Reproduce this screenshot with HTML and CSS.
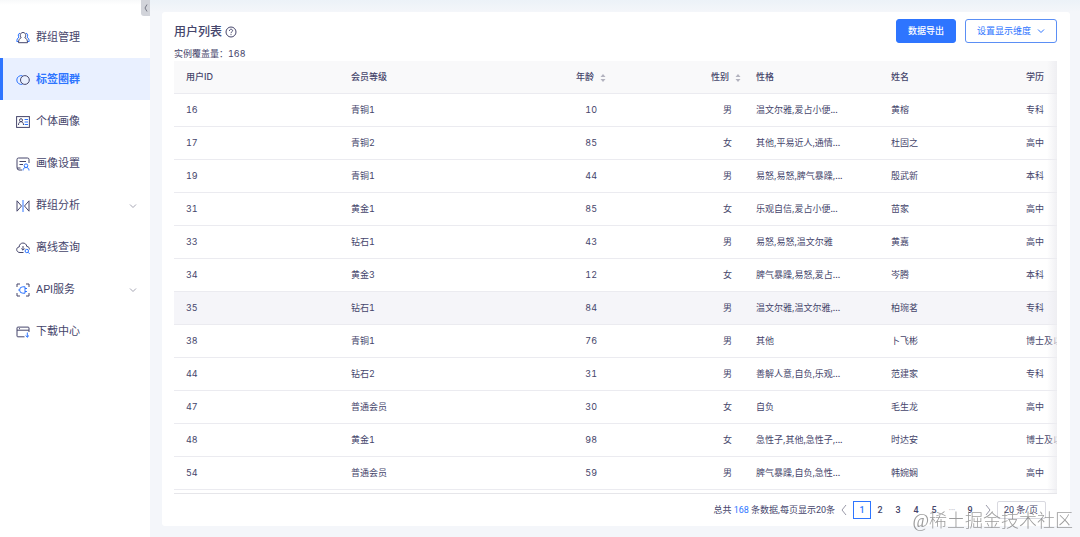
FILE: index.html
```html
<!DOCTYPE html>
<html lang="zh-CN">
<head>
    <meta charset="UTF-8">
    <meta name="viewport" content="width=device-width, initial-scale=1.0">
    <title>用户列表</title>
    <link rel="stylesheet" href="styles.css">
</head>
<body>
    <aside class="sidebar">
        <button class="collapse" type="button" aria-label="收起菜单">
            <svg width="6" height="10" viewBox="0 0 6 10"><path d="M4 1.5L2 5l2 3.5"/></svg>
        </button>
        <nav class="menu">
            <a href="#">
                <svg class="icon" viewBox="0 0 14 14">
                    <g class="blue"><path d="M4 2.2C2 2.5 1.800 5 3 6.200C1.500 7 .8 8.500.8 10.500h2"/><path d="M10 2.200c2 .3 2.200 2.800 1 4c1.500.8 2.200 2.300 2.200 4.300h-2"/></g>
                    <path d="M5.200 6.600C3.600 5 4 1.500 7 1.500s3.400 3.500 1.800 5.100c1.700.8 2.700 2.500 2.700 5.100H2.500c0-2.600 1-4.300 2.700-5.100z"/>
                </svg>
                群组管理
            </a>
            <a href="#" class="active">
                <svg class="icon" viewBox="0 0 14 14">
                    <path class="blue" d="M6.500 2.800A4.400 4.400 0 1 0 6.500 11.200"/>
                    <circle cx="8.900" cy="7" r="4.400"/>
                </svg>
                标签圈群
            </a>
            <a href="#">
                <svg class="icon" viewBox="0 0 14 14">
                    <rect x=".6" y="1.600" width="12.800" height="10.800"/>
                    <circle cx="5" cy="5.200" r="1.500"/><path d="M2.500 10c0-2 .9-3.300 2.500-3.300S7.500 8 7.500 10"/>
                    <path class="blue" d="M8.600 4.500H12M8.600 7H12M8.600 9.500H12"/>
                </svg>
                个体画像
            </a>
            <a href="#">
                <svg class="icon" viewBox="0 0 14 14">
                    <path d="M13 6V2.500Q13 1 11.500 1H2.500Q1 1 1 2.500v8Q1 13 3 13h3M1 11h3.500M3.500 4.500h6.500M3.500 7.500H7"/>
                    <g class="blue"><circle cx="10" cy="8.700" r="1.800"/><path d="M7 13.500c0-2 1.200-3 3-3s3 1 3 3"/></g>
                </svg>
                画像设置
            </a>
            <a href="#">
                <svg class="icon" viewBox="0 0 14 14">
                    <path d="M1 1.800v10.400L5.500 7zM13 1.800v10.400L8.500 7z"/>
                    <path class="blue" d="M7 1v12"/>
                </svg>
                群组分析
                <svg class="arrow" viewBox="0 0 8 8"><path d="M1 2.500l3 3 3-3"/></svg>
            </a>
            <a href="#">
                <svg class="icon" viewBox="0 0 14 14">
                    <path d="M7.500 11.500H4C-.3 11.500-.2 6 3.200 6C3.200.8 10.400.8 10.800 5.500c1.800 0 2.800 1.300 2.500 3M7 5v4M5.300 7.500L7 9.200l1.700-1.700"/>
                    <g class="blue"><circle cx="10.800" cy="10" r="1.700"/><path d="M12 11.200l1.600 1.600"/></g>
                </svg>
                离线查询
            </a>
            <a href="#">
                <svg class="icon" viewBox="0 0 14 14">
                    <path d="M1 4V1h3M10 1h3v3M13 10v3h-3M4 13H1v-3"/>
                    <path class="blue" d="M9 3.800H6.800a3.200 3.200 0 0 0 0 6.400H9zM9 5.500h2M9 8.500h2M2.200 7h1.500"/>
                </svg>
                API服务
                <svg class="arrow" viewBox="0 0 8 8"><path d="M1 2.500l3 3 3-3"/></svg>
            </a>
            <a href="#">
                <svg class="icon" viewBox="0 0 14 14">
                    <path d="M8.500 11.800H1.800Q1 11.800 1 11V3q0-.9.900-.9h10.200q.9 0 .9.900v4M1 5.200h12M3 3.700h1"/>
                    <path class="blue" d="M11.300 7.500v4.700M9.600 10.500l1.700 1.700 1.700-1.700"/>
                </svg>
                下载中心
            </a>
        </nav>
    </aside>
    <main class="content">
        <section class="card">
            <header class="card-header">
                <div>
                    <h1>
                        用户列表
                        <svg class="help" viewBox="0 0 12 12"><circle cx="6" cy="6" r="5"/><path d="M4.400 4.900c0-2.200 3.200-2.100 3.200-.2C7.600 5.800 6 5.800 6 7.200M6 8.200v.9"/></svg>
                    </h1>
                    <p>实例覆盖量：168</p>
                </div>
                <div class="actions">
                    <button type="button" class="btn primary">数据导出</button>
                    <button type="button" class="btn">设置显示维度 <svg class="arrow" viewBox="0 0 8 8"><path d="M1 2.500l3 3 3-3"/></svg></button>
                </div>
            </header>
            <div class="table-wrap">
                <table>
                    <colgroup>
                        <col class="col-id">
                        <col span="6">
                    </colgroup>
                    <thead>
                        <tr>
                            <th>用户ID</th>
                            <th>会员等级</th>
                            <th class="sortable">年龄<svg class="sorter" viewBox="0 0 6 8"><path d="M3 0l2.500 3h-5zM3 8l2.500-3h-5z"/></svg></th>
                            <th class="sortable">性别<svg class="sorter" viewBox="0 0 6 8"><path d="M3 0l2.500 3h-5zM3 8l2.500-3h-5z"/></svg></th>
                            <th>性格</th>
                            <th>姓名</th>
                            <th>学历</th>
                        </tr>
                    </thead>
                    <tbody>
                        <tr><td>16</td><td>青铜1</td><td class="num">10</td><td class="num">男</td><td>温文尔雅,爱占小便...</td><td>黄榕</td><td>专科</td></tr>
                        <tr><td>17</td><td>青铜2</td><td class="num">85</td><td class="num">女</td><td>其他,平易近人,通情...</td><td>杜固之</td><td>高中</td></tr>
                        <tr><td>19</td><td>青铜1</td><td class="num">44</td><td class="num">男</td><td>易怒,易怒,脾气暴躁,...</td><td>殷武新</td><td>本科</td></tr>
                        <tr><td>31</td><td>黄金1</td><td class="num">85</td><td class="num">女</td><td>乐观自信,爱占小便...</td><td>苗家</td><td>高中</td></tr>
                        <tr><td>33</td><td>钻石1</td><td class="num">43</td><td class="num">男</td><td>易怒,易怒,温文尔雅</td><td>黄嘉</td><td>高中</td></tr>
                        <tr><td>34</td><td>黄金3</td><td class="num">12</td><td class="num">女</td><td>脾气暴躁,易怒,爱占...</td><td>岑腾</td><td>本科</td></tr>
                        <tr class="hover"><td>35</td><td>钻石1</td><td class="num">84</td><td class="num">男</td><td>温文尔雅,温文尔雅,...</td><td>柏琬茗</td><td>专科</td></tr>
                        <tr><td>38</td><td>青铜1</td><td class="num">76</td><td class="num">男</td><td>其他</td><td>卜飞彬</td><td>博士及以上</td></tr>
                        <tr><td>44</td><td>钻石2</td><td class="num">31</td><td class="num">男</td><td>善解人意,自负,乐观...</td><td>范建家</td><td>专科</td></tr>
                        <tr><td>47</td><td>普通会员</td><td class="num">30</td><td class="num">女</td><td>自负</td><td>毛生龙</td><td>高中</td></tr>
                        <tr><td>48</td><td>黄金1</td><td class="num">98</td><td class="num">女</td><td>急性子,其他,急性子,...</td><td>时达安</td><td>博士及以上</td></tr>
                        <tr><td>54</td><td>普通会员</td><td class="num">59</td><td class="num">男</td><td>脾气暴躁,自负,急性...</td><td>韩婉娴</td><td>高中</td></tr>
                    </tbody>
                </table>
            </div>
            <footer class="pagination">
                <span>总共 <b>168</b> 条数据,每页显示20条</span>
                <button type="button" aria-label="上一页"><svg viewBox="0 0 8 12"><path d="M6 1L2 6l4 5"/></svg></button>
                <button type="button" class="current">1</button>
                <button type="button">2</button>
                <button type="button">3</button>
                <button type="button">4</button>
                <button type="button">5</button>
                <button type="button" class="more">•••</button>
                <button type="button">9</button>
                <button type="button" aria-label="下一页"><svg viewBox="0 0 8 12"><path d="M2 1l4 5-4 5"/></svg></button>
                <select aria-label="每页条数"><option>20 条/页</option></select>
            </footer>
        </section>
    </main>
    <div class="watermark">@稀土掘金技术社区</div>
</body>
</html>
```
FILE: styles.css
```css
* {
    box-sizing: border-box;
}
body {
    margin: 0;
    min-height: 100vh;
    display: flex;
    overflow: hidden;
    background: linear-gradient(#ecf2f8, #f4f6fa 12px);
    color: #45456b;
    font-family: Inter, "Noto Sans CJK SC", sans-serif;
    font-size: 9px;
    font-variant-numeric: tabular-nums;
    line-height: 12px;
}
button, select {
    font: inherit;
    color: inherit;
    cursor: pointer;
}
svg {
    fill: none;
    stroke: currentColor;
}
.sidebar {
    position: relative;
    flex: none;
    width: 150px;
    padding-top: 16px;
    background: linear-gradient(#f8f9fa, #fff 5px);
}
.collapse {
    position: absolute;
    top: 0;
    right: 0;
    display: flex;
    align-items: center;
    justify-content: center;
    width: 9px;
    height: 16px;
    padding: 0;
    border: none;
    border-radius: 0 0 0 3px;
    background: #d2d4da;
    color: #777985;
}
.menu a {
    display: flex;
    align-items: center;
    gap: 6px;
    height: 42px;
    padding: 2px 13px 0 16px;
    color: #45456b;
    font-family: Roboto, "Noto Sans CJK SC", sans-serif;
    font-size: 11px;
    text-decoration: none;
}
.menu .active {
    border-left: 3px solid #2e75ff;
    padding-left: 13px;
    background: #e9f0ff;
    color: #2e75ff;
    font-weight: 600;
}
.icon {
    width: 14px;
    height: 14px;
    color: #45456b;
}
.blue {
    stroke: #2e75ff;
}
.arrow {
    width: 8px;
    height: 8px;
}
.menu .arrow {
    margin-left: auto;
    color: #a5a5b3;
}
.content {
    flex: 1;
    min-width: 0;
    padding: 12px 10px 12px 12px;
}
.card {
    padding: 7px 13px 0 12px;
    border-radius: 3px;
    background: #fff;
}
.card-header {
    display: flex;
    justify-content: space-between;
    height: 42px;
}
h1 {
    display: flex;
    align-items: center;
    gap: 3px;
    margin: 0;
    padding-top: 1px;
    font-size: 12px;
    font-weight: 500;
    line-height: 24px;
}
.help {
    width: 12px;
    height: 12px;
}
.card-header p {
    margin: 4px 0 0;
}
.actions {
    display: flex;
    gap: 9px;
}
.btn {
    display: flex;
    align-items: center;
    gap: 6px;
    height: 24px;
    padding: 0 11px;
    border: 1px solid #5b8ff5;
    border-radius: 3px;
    background: #fff;
    color: #2e75ff;
}
.primary {
    border-color: #2e75ff;
    background: #2e75ff;
    color: #fff;
    font-weight: 500;
}
.table-wrap {
    position: relative;
    height: 433px;
    overflow: hidden;
    border-bottom: 1px solid #e6e6ea;
}
/* fade over the columns that scroll out on the right */
.table-wrap::after {
    content: "";
    position: absolute;
    top: 0;
    right: 0;
    bottom: 0;
    width: 10px;
    background: linear-gradient(to right, rgba(236, 236, 240, 0), rgba(236, 236, 240, 0.8));
}
table {
    width: 975px;
    table-layout: fixed;
    border-collapse: separate;
    border-spacing: 0;
}
.col-id {
    width: 165px;
}
th, td {
    height: 33px;
    padding: 0 12px;
    border-bottom: 1px solid #ebebf0;
    text-align: left;
    white-space: nowrap;
}
th {
    background: #f9f9fa;
    font-weight: 500;
}
.num, .sortable {
    text-align: right;
}
.sortable {
    padding-right: 3px;
}
.sorter {
    width: 6px;
    height: 8px;
    margin-left: 6px;
    fill: #b3b3bf;
    stroke: none;
    vertical-align: middle;
}
.hover td {
    background: #f5f5f9;
}
.pagination {
    display: flex;
    align-items: center;
    justify-content: flex-end;
    height: 32px;
    padding-right: 11px;
    font-family: Roboto, "Noto Sans CJK SC", sans-serif;
}
.pagination b {
    color: #2e75ff;
    font-weight: 400;
}
.pagination button {
    display: flex;
    align-items: center;
    justify-content: center;
    width: 18px;
    height: 18px;
    padding: 0;
    border: none;
    background: none;
    font-weight: 500;
}
.pagination .current {
    border: 1px solid #2e75ff;
    color: #2e75ff;
}
.pagination .more {
    color: #c8c8d0;
    font-size: 6px;
}
.pagination svg {
    width: 8px;
    height: 12px;
    color: #9a9aa8;
}
.pagination select {
    appearance: none;
    width: 49px;
    height: 18px;
    padding: 0 6px;
    border: 1px solid #d9d9e0;
    border-radius: 2px;
    background: #fff;
}
.watermark {
    position: fixed;
    right: 7px;
    bottom: 4px;
    color: rgba(90, 90, 90, 0.6);
    font-family: "Liberation Serif", "Noto Sans CJK SC", serif;
    font-size: 18px;
    font-weight: 300;
    line-height: 24px;
    pointer-events: none;
}
```
